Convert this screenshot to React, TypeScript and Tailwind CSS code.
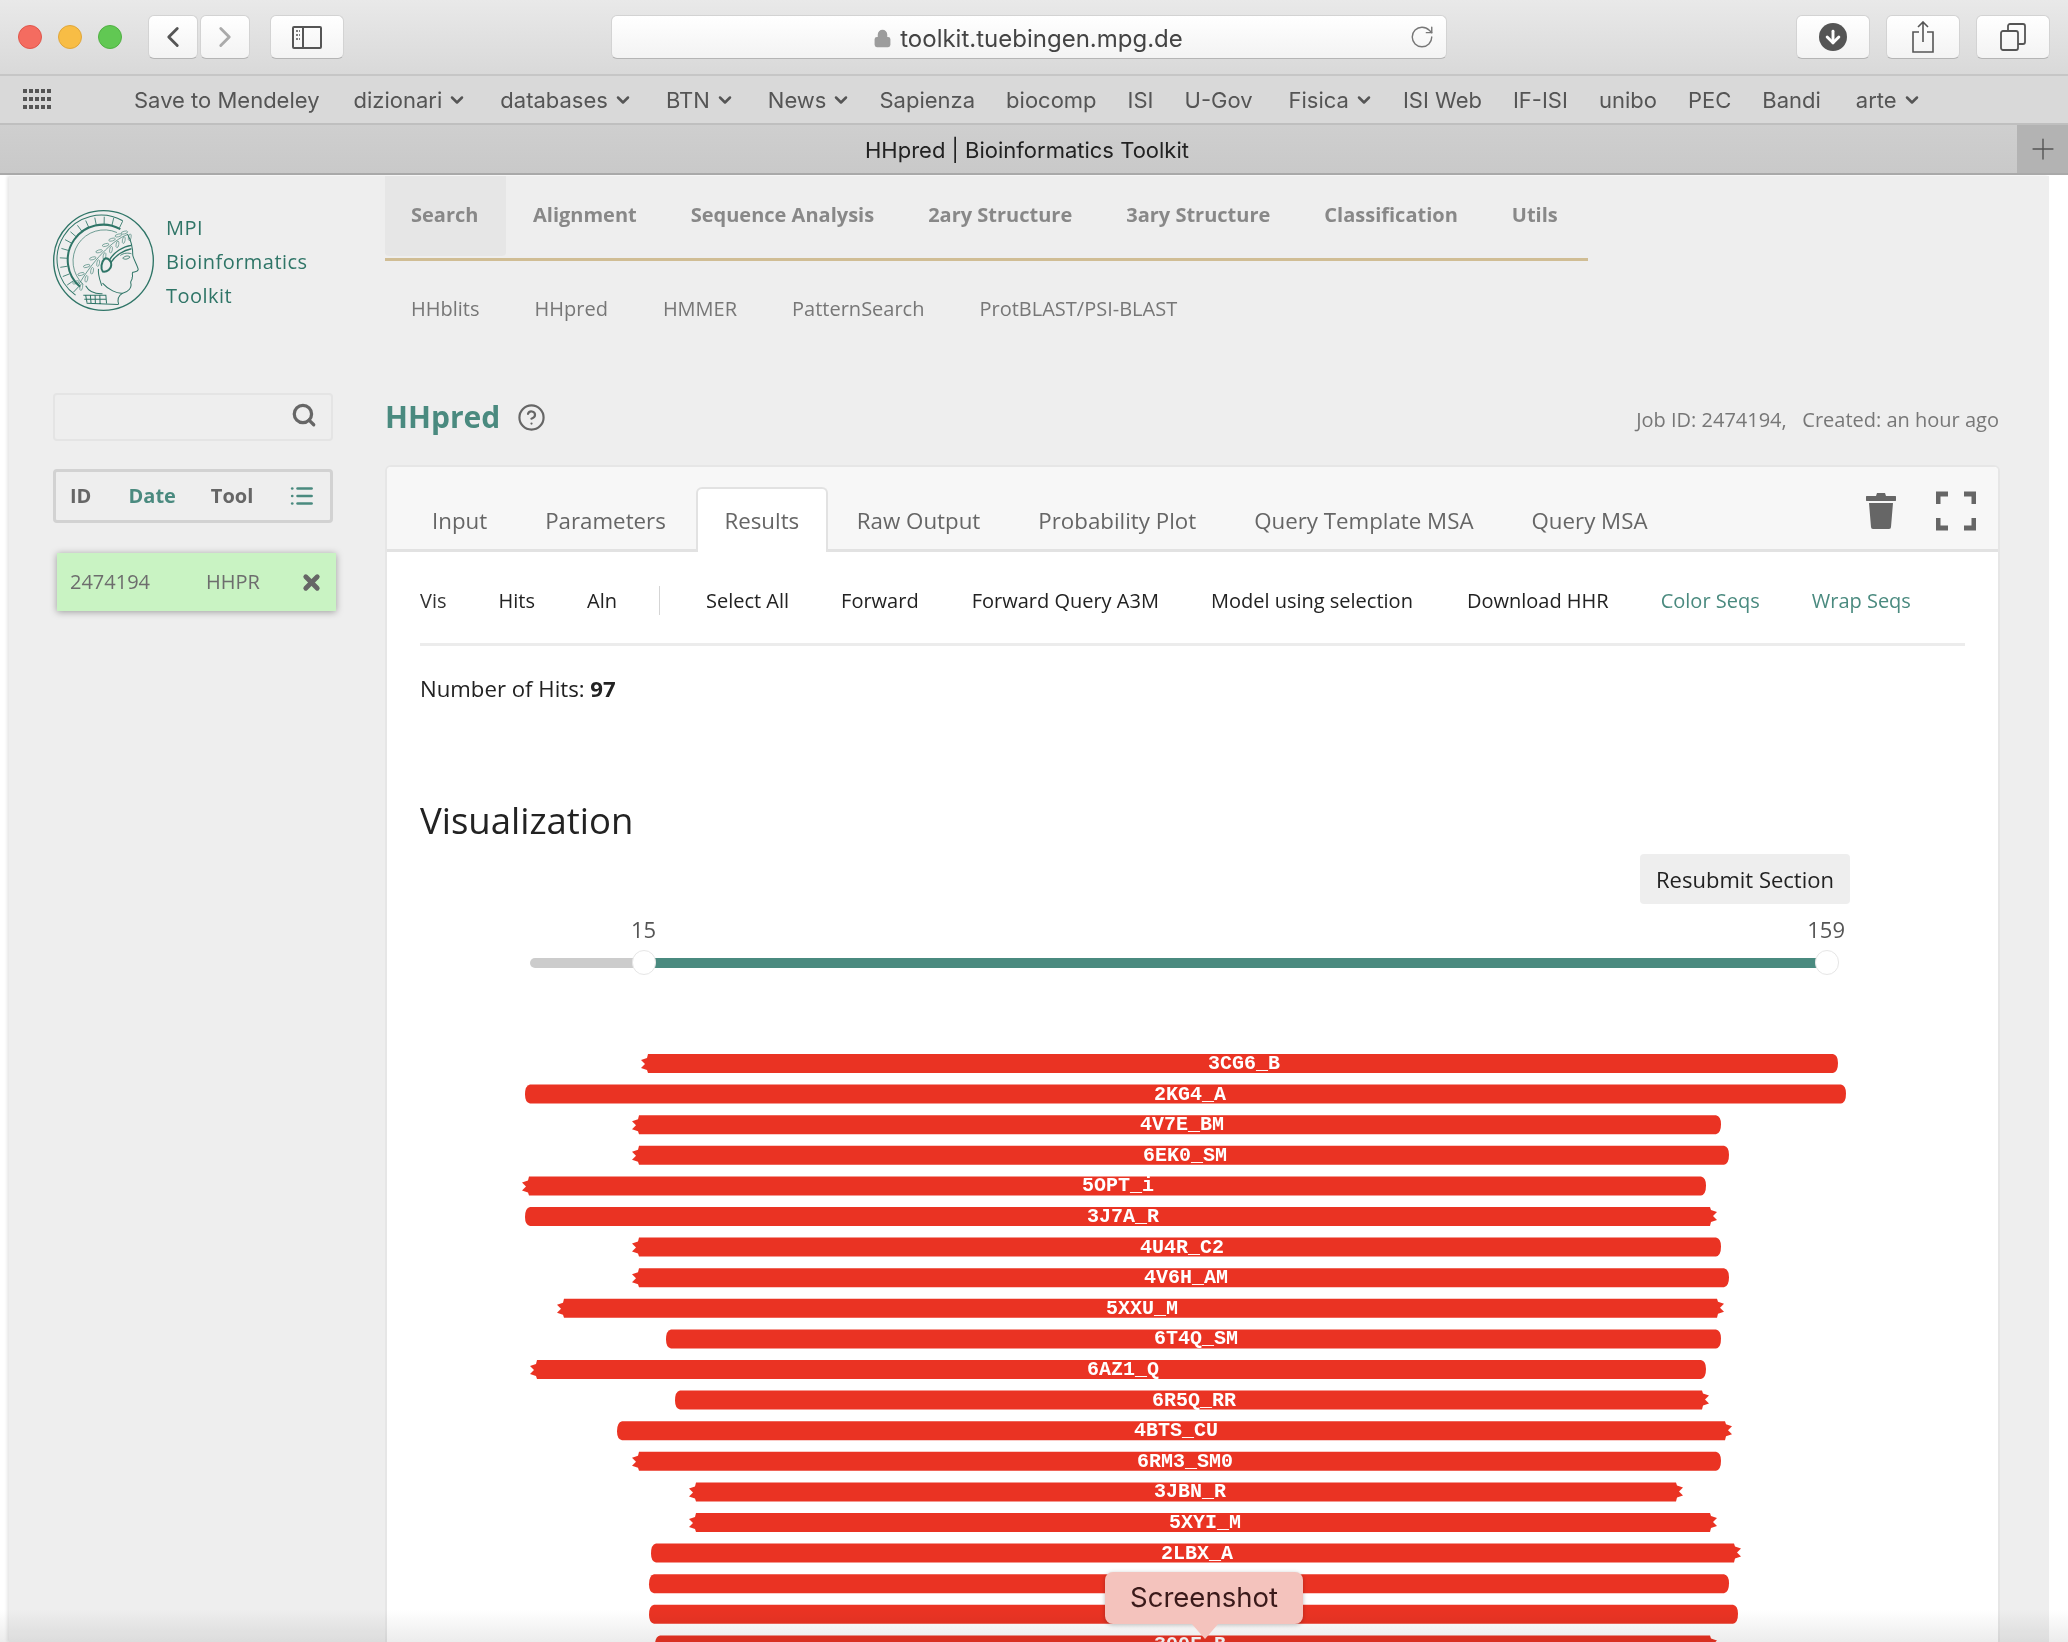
import React from "react";
import { Search, X, List, HelpCircle, ChevronDown, ChevronLeft, ChevronRight, RotateCw, Plus, Lock, ArrowDown } from "lucide-react";

const bookmarks: [string, boolean, string][] = [
  ["Save to Mendeley", false, "mr-[34px]"], ["dizionari", true, "mr-[33px]"], ["databases", true, "mr-[33px]"], ["BTN", true, "mr-[33px]"], ["News", true, "mr-[28px]"], ["Sapienza", false, "mr-[31px]"],
  ["biocomp", false, "mr-[31px]"], ["ISI", false, "mr-[31px]"], ["U-Gov", false, "mr-[36px]"], ["Fisica", true, "mr-[29px]"], ["ISI Web", false, "mr-[31px]"], ["IF-ISI", false, "mr-[31px]"], ["unibo", false, "mr-[31px]"], ["PEC", false, "mr-[31px]"], ["Bandi", false, "mr-[35px]"], ["arte", true, "mr-0"],
];

type End = "j" | "r";
const bars: [string, number, number, End, End, number][] = [
  ["3CG6_B", 641, 1838, "j", "r", 1244],
  ["2KG4_A", 525, 1846, "r", "r", 1190],
  ["4V7E_BM", 632, 1721, "j", "r", 1182],
  ["6EK0_SM", 632, 1729, "j", "r", 1185],
  ["5OPT_i", 522, 1706, "j", "r", 1118],
  ["3J7A_R", 525, 1717, "r", "j", 1123],
  ["4U4R_C2", 632, 1721, "j", "r", 1182],
  ["4V6H_AM", 632, 1729, "j", "r", 1186],
  ["5XXU_M", 557, 1724, "j", "j", 1142],
  ["6T4Q_SM", 666, 1721, "r", "r", 1196],
  ["6AZ1_Q", 530, 1706, "j", "r", 1123],
  ["6R5Q_RR", 675, 1709, "r", "j", 1194],
  ["4BTS_CU", 617, 1732, "r", "j", 1176],
  ["6RM3_SM0", 632, 1721, "j", "r", 1185],
  ["3JBN_R", 689, 1683, "j", "j", 1190],
  ["5XYI_M", 689, 1717, "j", "j", 1205],
  ["2LBX_A", 651, 1741, "r", "j", 1197],
  ["", 649, 1729, "r", "r", 1204],
  ["", 649, 1738, "r", "r", 1204],
  ["300F_B", 655, 1717, "r", "j", 1190],
];

function barPath(x1: number, x2: number, l: End, r: End, y: number) {
  const h = 19;
  const t = y, b = y + h;
  const left =
    l === "j"
      ? `L${x1 + 7} ${b} L${x1 + 6} ${b - 3} L${x1} ${b - 5} L${x1 + 4} ${b - 9} L${x1} ${b - 13} L${x1 + 6} ${b - 15} L${x1 + 7} ${t}`
      : `L${x1 + 5} ${b} Q${x1} ${b - 1} ${x1} ${b - 9} Q${x1} ${t + 1} ${x1 + 5} ${t}`;
  const right =
    r === "j"
      ? `L${x2 - 7} ${t} L${x2 - 6} ${t + 3} L${x2} ${t + 5} L${x2 - 4} ${t + 9} L${x2} ${t + 13} L${x2 - 6} ${t + 15} L${x2 - 7} ${b}`
      : `L${x2 - 5} ${t} Q${x2} ${t + 1} ${x2} ${t + 9} Q${x2} ${b - 1} ${x2 - 5} ${b}`;
  return `M${x1 + 8} ${t} ${right} ${left} Z`;
}

function Logo() {
  const ticks = [];
  for (let a = 64; a <= 232; a += 12.5) {
    const r = (a * Math.PI) / 180;
    ticks.push(<line key={a} x1={165 + 108 * Math.cos(r)} y1={165 - 108 * Math.sin(r)} x2={165 + 130 * Math.cos(r)} y2={165 - 130 * Math.sin(r)} />);
  }
  const leaves = [];
  for (let i = 0; i < 9; i++) {
    const t = i / 8;
    const u = 1 - t;
    const x = u * u * u * 236 + 3 * u * u * t * 190 + 3 * u * t * t * 130 + t * t * t * 92;
    const y = u * u * u * 88 + 3 * u * u * t * 105 + 3 * u * t * t * 170 + t * t * t * 236;
    leaves.push(<ellipse key={`a${i}`} cx={x - 9} cy={y - 6} rx="10" ry="4" transform={`rotate(-15 ${x - 9} ${y - 6})`} />);
    leaves.push(<ellipse key={`b${i}`} cx={x + 7} cy={y + 8} rx="10" ry="4" transform={`rotate(-80 ${x + 7} ${y + 8})`} />);
  }
  return (
    <svg viewBox="15 15 300 300" className="w-[101px] h-[101px] shrink-0" fill="none" stroke="#2f7567">
      <circle cx="165" cy="165" r="148" strokeWidth="4" />
      <path d="M222 47 A131 131 0 0 0 82 268" strokeWidth="3" />
      <path d="M215 72 A105 105 0 0 0 95 243" strokeWidth="6" />
      <path d="M205 82 A93 93 0 0 0 105 236" strokeWidth="2" />
      <g strokeWidth="2.5">{ticks}</g>
      <path d="M236 88 C190 105 130 170 92 236" strokeWidth="2" />
      <g strokeWidth="2" opacity="0.8">{leaves}</g>
      <path d="M236 86 C250 110 252 135 252 150 C256 165 268 185 268 192 C266 200 255 198 252 200 C248 205 254 212 250 215 C252 222 244 225 246 232 C250 245 240 258 222 262 C205 264 180 252 162 232" strokeWidth="3" />
      <path d="M222 262 C208 270 205 280 210 296" strokeWidth="3" />
      <path d="M182 165 C195 140 225 122 248 120 M186 172 C200 150 225 134 248 130" strokeWidth="4" />
      <path d="M222 158 C230 150 240 150 244 155 C236 162 228 163 222 158 M215 150 C225 142 240 142 248 145" strokeWidth="2.5" />
      <path d="M168 160 C158 170 156 190 163 198 C176 200 188 190 188 178 C190 168 178 155 168 160 Z" strokeWidth="6" />
      <path d="M150 190 C148 210 155 225 160 240 M112 240 C122 258 140 265 162 264" strokeWidth="3" />
      <path d="M105 268 L172 268 L174 292 M108 280 L172 280 M112 268 L116 290 M126 268 L128 292 M140 268 L141 294 M154 268 L155 295 M115 292 L208 296" strokeWidth="3" />
    </svg>
  );
}

const btn = "h-[44px] bg-gradient-to-b from-white to-[#f3f3f3] rounded-[6px] border border-[#d3d3d3] border-b-[#b5b5b5] flex items-center justify-center";
const sans = "font-['Inter','Liberation_Sans',sans-serif]";

export default function App() {
  return (
    <div className="w-[2068px] h-[1642px] overflow-hidden relative bg-white font-['Open_Sans',sans-serif]">
      {/* Browser chrome */}
      <div className={`${sans} h-[176px] flex flex-col`}>
        <div className="h-[76px] bg-gradient-to-b from-[#e9e9e9] to-[#d9d9d9] border-b-2 border-[#c6c6c6] flex items-center pl-[18px] pb-[1px]">
          <div className="flex gap-[16px]">
            <span className="w-[24px] h-[24px] rounded-full bg-[#f46c60] border border-[#e0564b]" />
            <span className="w-[24px] h-[24px] rounded-full bg-[#f8bd45] border border-[#e0a63a]" />
            <span className="w-[24px] h-[24px] rounded-full bg-[#61c853] border border-[#50b043]" />
          </div>
          <div className={`${btn} w-[50px] ml-[26px]`}><ChevronLeft size={34} strokeWidth={2} color="#555" /></div>
          <div className={`${btn} w-[50px] ml-[2px]`}><ChevronRight size={34} strokeWidth={2} color="#aaa" /></div>
          <div className={`${btn} w-[74px] ml-[20px]`}>
            <svg width="30" height="24" viewBox="0 0 30 24" fill="none" stroke="#555" strokeWidth="2"><rect x="1" y="2" width="28" height="21" rx="1" /><path d="M11 2v21" /><path d="M4 6h4M4 10h4M4 14h4" strokeWidth="1.6" strokeDasharray="2 1" /></svg>
          </div>
          <div className={`${btn} w-[836px] ml-[267px] relative pt-[4px]`}>
            <Lock size={19} fill="#9c9c9c" color="#9c9c9c" className="mr-[8px] -ml-[2px]" />
            <span className="text-[24px] text-[#444]">toolkit.tuebingen.mpg.de</span>
            <RotateCw size={26} strokeWidth={1.3} color="#777" className="absolute right-[11px] top-[8px]" />
          </div>
          <div className={`${btn} w-[74px] ml-[349px]`}>
            <span className="w-[28px] h-[28px] rounded-full bg-[#555] flex items-center justify-center"><ArrowDown size={20} strokeWidth={3.5} color="#fff" /></span>
          </div>
          <div className={`${btn} w-[74px] ml-[16px]`}><svg width="24" height="32" viewBox="0 0 24 32" fill="none" stroke="#555" strokeWidth="1.6"><path d="M12 1v20M7 6l5-5 5 5M8 11H2v20h20V11h-6" /></svg></div>
          <div className={`${btn} w-[74px] ml-[16px]`}><svg width="26" height="28" viewBox="0 0 26 28" fill="none" stroke="#555" strokeWidth="1.8"><rect x="1" y="8" width="17" height="19" rx="2" /><path d="M8 8V3a2 2 0 0 1 2-2h13a2 2 0 0 1 2 2v16a2 2 0 0 1-2 2h-5" /></svg></div>
        </div>
        <div className="h-[49px] bg-[#d9d9d9] border-b-2 border-[#bfbfbf] flex items-center relative">
          <svg width="30" height="22" viewBox="0 0 30 22" fill="#555" className="ml-[23px]">
            {[0, 8, 16].map((y) => [0, 6, 12, 18, 24].map((x) => <rect key={`${x}-${y}`} x={x} y={y} width="4" height="4" />))}
          </svg>
          <div className="flex items-center ml-[81px] pt-[1px] text-[22px] text-[#555]">
            {bookmarks.map(([b, c, m]) => (
              <span key={b} className={`flex items-center gap-[5px] ${m}`}>
                {b}
                {c && <ChevronDown size={20} strokeWidth={3} />}
              </span>
            ))}
          </div>
        </div>
        <div className="h-[50px] bg-gradient-to-b from-[#cfcfcf] to-[#c9c9c9] border-b-2 border-[#a9a9a9] flex items-center justify-center relative text-[22px] text-[#222]">
          <span className="-ml-[14px] pt-[2px]">HHpred | Bioinformatics Toolkit</span>
          <div className="absolute right-0 top-0 w-[51px] h-[48px] bg-[#b3b3b3] flex items-center justify-center"><Plus size={34} strokeWidth={1} color="#555" /></div>
        </div>
      </div>

      {/* Page */}
      <div className="h-[1466px] bg-[#eeeeee] ml-[9px] mr-[19px] flex pl-[44px] shadow-[-2px_0_3px_rgba(0,0,0,0.1)]">
        <aside className="w-[332px] shrink-0 flex flex-col">
          <div className="flex items-start gap-[12px] pt-[34px] h-[217px]">
            <Logo />
            <div className="text-[20px] leading-[34px] text-[#2f7567] pt-[1px] tracking-[0.45px]">MPI<br />Bioinformatics<br />Toolkit</div>
          </div>
          <div className="w-[280px] h-[48px] border-2 border-[#e4e4e4] rounded-[4px] flex items-center justify-end pr-[14px] pb-[4px]"><Search size={26} strokeWidth={3} color="#666" /></div>
          <div className="w-[280px] h-[54px] mt-[28px] border-[3px] border-[#d2d2d2] rounded-[4px] flex items-center text-[20px] font-bold text-[#666] pl-[14px] pr-[15px]">
            <span className="w-[59px]">ID</span>
            <span className="w-[83px] text-[#4a8a7f]">Date</span>
            <span className="w-[79px]">Tool</span>
            <List size={26} strokeWidth={2.5} color="#4a8a7f" />
          </div>
          <div className="w-[279px] h-[58px] mt-[30px] ml-[4px] bg-[#c9f3c3] shadow-[0_1px_7px_rgba(0,0,0,0.35)] flex items-center text-[20px] text-[#6d6d6d] pl-[13px] pr-[13px]">
            <span className="w-[136px]">2474194</span>
            <span className="flex-1">HHPR</span>
            <X size={23} strokeWidth={5} color="#666" />
          </div>
        </aside>

        <main className="flex-1 min-w-0">
          <div className="w-[1203px] h-[85px] border-b-[3px] border-[#d0bd94] flex text-[20px] font-bold text-[#888]">
            <span className="w-[121px] h-[80px] bg-[#e6e6e6] rounded-b-[4px] pt-[24px] pl-[26px]">Search</span>
            <div className="flex gap-[54px] pt-[24px] pl-[27px]">
              {["Alignment", "Sequence Analysis", "2ary Structure", "3ary Structure", "Classification", "Utils"].map((t) => <span key={t} className="h-[28px]">{t}</span>)}
            </div>
          </div>
          <div className="flex gap-[55px] pl-[26px] pt-[33px] text-[20px] text-[#777] h-[132px]">
            {["HHblits", "HHpred", "HMMER", "PatternSearch", "ProtBLAST/PSI-BLAST"].map((t) => <span key={t}>{t}</span>)}
          </div>
          <div className="flex items-center h-[46px] w-[1614px]">
            <span className="text-[30px] font-bold text-[#4a8a7f]">HHpred</span>
            <HelpCircle size={29} strokeWidth={1.8} color="#666" className="ml-[17px] mt-[2px]" />
            <span className="ml-auto text-[20px] text-[#777] mt-[8px]">Job ID: 2474194,&nbsp;&nbsp; Created: an hour ago</span>
          </div>
          <div className="w-[1615px] mt-[26px] bg-white border-2 border-[#e6e6e6] rounded-t-[6px] h-[1300px]">
            <div className="h-[85px] bg-[#f7f7f7] rounded-t-[4px] border-b-[3px] border-[#e2e2e2] flex items-end pl-[45px] pr-[22px] text-[22.3px] text-[#666]">
              <div className="flex items-center h-[56px] gap-[58px]">
                <span>Input</span>
                <span>Parameters</span>
              </div>
              <div className="h-[65px] w-[132px] ml-[30px] -mb-[3px] bg-white border-2 border-b-0 border-[#e2e2e2] rounded-t-[6px] flex items-center justify-center">Results</div>
              <div className="flex items-center h-[56px] gap-[58px] ml-[29px]">
                <span>Raw Output</span>
                <span>Probability Plot</span>
                <span>Query Template MSA</span>
                <span>Query MSA</span>
              </div>
              <div className="ml-auto self-start flex items-center gap-[40px] pt-[24px]">
                <svg width="30" height="36" viewBox="0 0 30 36" fill="#666"><path d="M11 0h8l1 3h9a1 1 0 0 1 0 5H1a1 1 0 0 1 0-5h9zM3 10h24l-2 24a2 2 0 0 1-2 2H7a2 2 0 0 1-2-2z" /></svg>
                <svg width="40" height="40" viewBox="0 0 40 40" fill="none" stroke="#666" strokeWidth="5"><path d="M2 13V3h10M28 3h10v10M38 27v10H28M12 37H2V27" /></svg>
              </div>
            </div>
            <div className="px-[33px]">
              <div className="h-[94px] border-b-[3px] border-[#ececec] flex items-center text-[20px] text-[#222] w-[1545px] pt-[6px]">
                <span className="text-[#333]">Vis</span>
                <span className="ml-[52px]">Hits</span>
                <span className="ml-[52px]">Aln</span>
                <span className="w-[1px] h-[29px] bg-[#d5d5d5] ml-[42px] mr-[46px]" />
                <span>Select All</span>
                <span className="ml-[52px]">Forward</span>
                <span className="ml-[53px]">Forward Query A3M</span>
                <span className="ml-[52px]">Model using selection</span>
                <span className="ml-[54px]">Download HHR</span>
                <span className="ml-[52px] text-[#4a8a7f]">Color Seqs</span>
                <span className="ml-[52px] text-[#4a8a7f]">Wrap Seqs</span>
              </div>
              <div className="mt-[26px] text-[22.2px] text-[#222]">Number of Hits: <b>97</b></div>
              <h2 className="mt-[89px] text-[36.5px] leading-[52px] text-[#222]">Visualization</h2>
              <div className="flex justify-end pr-[115px] mt-[8px]">
                <div className="w-[210px] h-[50px] bg-[#eeeeee] rounded-[4px] flex items-center justify-center text-[22px] text-[#222]">Resubmit Section</div>
              </div>
              <div className="relative h-[70px] ml-[110px] mt-[1px] w-[1310px]">
                <span className="absolute left-[101px] top-[8px] text-[22px] text-[#555]">15</span>
                <span className="absolute right-[-5px] top-[8px] text-[22px] text-[#555]">159</span>
                <div className="absolute left-0 top-[53px] w-[110px] h-[10px] rounded-l-full bg-[#cccccc]" />
                <div className="absolute left-[110px] top-[53px] w-[1190px] h-[10px] bg-[#4a8a7f]" />
                <span className="absolute left-[102px] top-[45px] w-[24px] h-[25px] rounded-full bg-white border border-[#e6e6e6]" />
                <span className="absolute left-[1285px] top-[45px] w-[24px] h-[25px] rounded-full bg-white border border-[#e6e6e6]" />
              </div>
            </div>
            <svg viewBox="387 1040 1610 620" width="1610" height="620" className="mt-[65px] block">
              {bars.map(([name, x1, x2, l, r, c], i) => {
                const y = 1054 + i * 30.6;
                return (
                  <g key={i}>
                    <path d={barPath(x1, x2, l, r, y)} fill="#ea3323" />
                    {name && (
                      <text x={c} y={y + 15} textAnchor="middle" fill="#fff" fontFamily="'Liberation Mono', monospace" fontWeight="700" fontSize="21" textLength={12 * name.length} lengthAdjust="spacingAndGlyphs">{name}</text>
                    )}
                  </g>
                );
              })}
            </svg>
          </div>
        </main>
      </div>

      {/* Window bottom fade */}
      <div className="absolute left-0 right-0 bottom-0 h-[32px] bg-gradient-to-b from-white to-[#ececec] mix-blend-multiply pointer-events-none" />

      {/* Tooltip */}
      <div className="absolute left-[1105px] top-[1572px] w-[198px] h-[52px] bg-[#f4c3bd] rounded-[8px] shadow-[0_1px_4px_rgba(0,0,0,0.25)] flex items-center justify-center text-[27.5px] text-[#3a1a1a] font-['Inter',sans-serif]">
        Screenshot
        <span className="absolute left-[86px] top-[51px] w-0 h-0 border-l-[14px] border-r-[14px] border-t-[16px] border-l-transparent border-r-transparent border-t-[#f4c3bd]" />
      </div>
    </div>
  );
}
